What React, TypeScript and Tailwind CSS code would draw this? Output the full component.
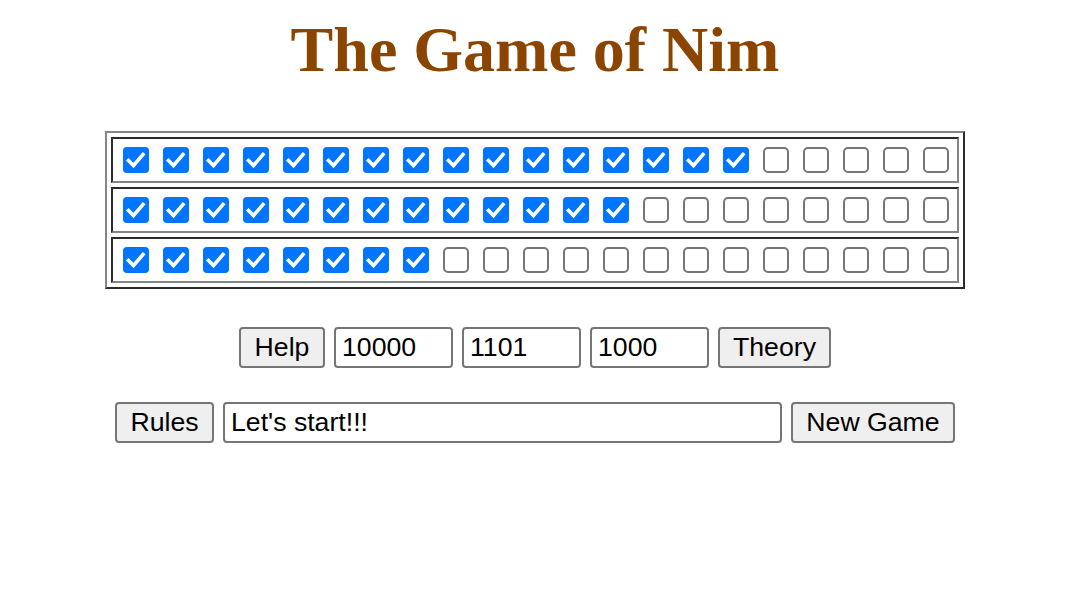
import React from "react";

const ROWS = [16, 13, 8];
const TOTAL = 21;

function Box({ checked }: { checked: boolean }) {
  if (checked) {
    return (
      <div className="ml-[8px] mr-[6px] my-[6px] w-[26px] h-[26px] rounded-[4px] bg-[#0075ff] flex items-center justify-center shrink-0">
        <svg width="26" height="26" viewBox="0 0 26 26">
          <path d="M5.5 13.5 L10.5 18.5 L20 7.5" fill="none" stroke="#ffffff" strokeWidth="3.6" strokeLinecap="square" strokeLinejoin="miter" />
        </svg>
      </div>
    );
  }
  return (
    <div className="ml-[8px] mr-[6px] my-[6px] w-[26px] h-[26px] rounded-[5px] border-2 border-[#767676] bg-white shrink-0" />
  );
}

function Btn({ label, w }: { label: string; w: string }) {
  return (
    <div
      className={`${w} h-[41px] shrink-0 flex items-center justify-center rounded-[4px] border-2 border-[#767676] bg-[#efefef] text-black text-[26.67px] leading-none`}
    >
      {label}
    </div>
  );
}

function Field({ value, w }: { value: string; w: string }) {
  return (
    <div
      className={`${w} h-[41px] shrink-0 flex items-center pl-[6px] rounded-[4px] border-2 border-[#767676] bg-white text-black text-[26.67px] leading-none`}
    >
      {value}
    </div>
  );
}

export default function App() {
  return (
    <div className="w-[1070px] min-h-[616px] bg-white flex flex-col items-center font-['Liberation_Sans',Arial,sans-serif]">
      <h1 className="mt-[13px] text-[64px] leading-[73.6px] font-bold text-[#8b4500] font-['Liberation_Serif','Times_New_Roman',serif]">
        The Game of Nim
      </h1>

      <div className="mt-[44px] border-2 border-t-[#858585] border-l-[#858585] border-b-[#2b2b2b] border-r-[#2b2b2b] p-[4px] flex flex-col gap-[4px]">
        {ROWS.map((n, r) => (
          <div
            key={r}
            className="border-2 border-t-[#2b2b2b] border-l-[#2b2b2b] border-b-[#858585] border-r-[#858585] p-[2px] flex"
          >
            {Array.from({ length: TOTAL }).map((_, i) => (
              <Box key={i} checked={i < n} />
            ))}
          </div>
        ))}
      </div>

      <div className="mt-[38px] flex gap-[9px]">
        <Btn label="Help" w="w-[86px]" />
        <Field value="10000" w="w-[119px]" />
        <Field value="1101" w="w-[119px]" />
        <Field value="1000" w="w-[119px]" />
        <Btn label="Theory" w="w-[113px]" />
      </div>

      <div className="mt-[34px] flex gap-[9px]">
        <Btn label="Rules" w="w-[99px]" />
        <Field value="Let's start!!!" w="w-[559px]" />
        <Btn label="New Game" w="w-[164px]" />
      </div>
    </div>
  );
}
